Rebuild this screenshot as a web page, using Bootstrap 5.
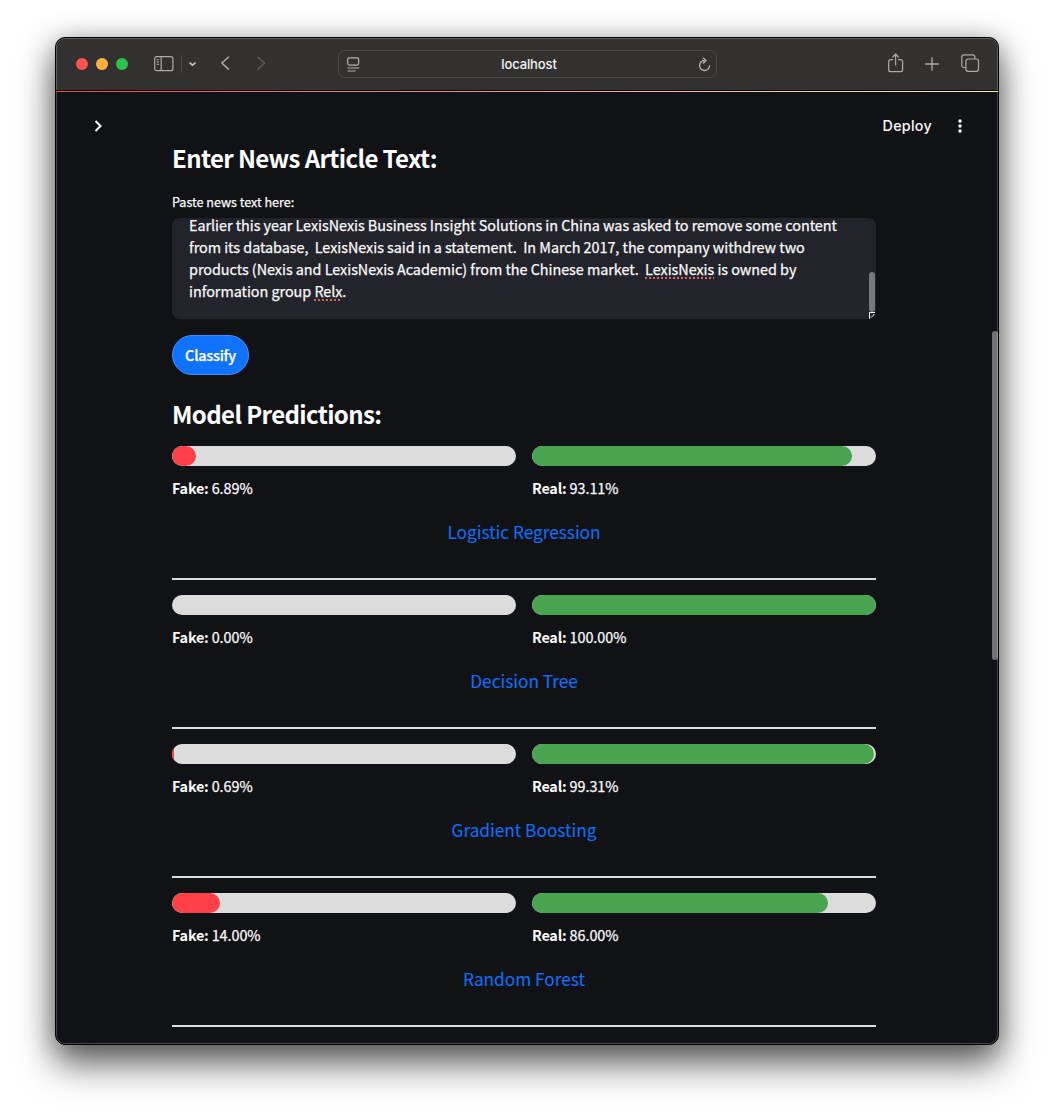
<!DOCTYPE html>
<html lang="en" data-bs-theme="dark">
<head>
<meta charset="utf-8">
<title>localhost</title>
<link href="https://cdn.jsdelivr.net/npm/bootstrap@5.3.0/dist/css/bootstrap.min.css" rel="stylesheet">
<style>
body{background:#fff;color:#fafafa;font-family:"Noto Sans CJK SC","Noto Sans",sans-serif;font-size:14.4px;line-height:24px;height:1118px;overflow:hidden}
.win{width:944px;height:1008px;margin:37px 0 0 55px;background:#111216;border:1px solid #000;border-radius:10px;overflow:hidden;position:relative}
.shade{width:944px;height:1008px;left:55px;top:37px;border-radius:10px;box-shadow:0 20px 36px rgba(0,0,0,.55),0 4px 28px rgba(0,0,0,.34)}
.rim{inset:0;border:1px solid rgba(255,255,255,.22);border-radius:9px;pointer-events:none;z-index:5}
.bar{height:52px;background:#32312f;color:#adacaa}
.dots{gap:8px;margin-left:20px}
.dots span{width:12px;height:12px;border-radius:50%}
.dot-close{background:#ff5350}.dot-min{background:#ffb13f}.dot-max{background:#2cc148}
.address{width:379px;height:28px;border:1px solid #494846;border-radius:7px;margin-left:72px;padding:0 5px 0 8px;color:#b5b4b2}
.host{font:500 13px Inter,sans-serif;color:#f4f4f4;letter-spacing:-.12px}
.accent{height:1px;margin-top:1px;position:relative;z-index:6;background:linear-gradient(90deg,#f04848,#f8f290);box-shadow:0 -1px #000}
.apphead{height:68px;padding:0 35px 0 38px}
.deploy{font:500 14.3px Inter,sans-serif;letter-spacing:.28px;margin-top:-2px}
.main{width:704px;margin:-19px 0 0 116px;-webkit-text-stroke:.25px currentColor}
.head3{font-size:24px;font-weight:700;line-height:34px;margin:0;letter-spacing:-.62px;white-space:nowrap;-webkit-text-stroke:0}
.lbl{font-size:12.6px;line-height:20px;margin-top:17px;letter-spacing:-.03px}
.box{height:101px;background:#23232b;border-radius:8px;overflow:hidden;margin-top:6px;padding:0 17px;line-height:22px;letter-spacing:-.035px}
.box div{white-space:pre;position:relative}
.box .l1{margin-top:-4px}
.box .sp{text-decoration:underline dotted #d8606a 2px;text-underline-offset:2px}
.thumb{width:6px;height:40px;right:1px;top:54px;background:#77787c;border-radius:3px}
.grip{right:0;bottom:0}
.go{width:77px;height:40px;border:1px solid #3f8dff;background:#0f73ff;border-radius:20px;color:#fff;margin-top:16px;font-weight:500;padding:0;font-size:14.4px;line-height:24px;letter-spacing:-.22px}
.predictions{margin-top:22px}
.models{margin-top:15px}
.track{height:20px;border-radius:10px;background:#dcdcdc}
.track .progress-bar{border-radius:10px}
.fake{background:#ff4048}.real{background:#48a44f}
.val{margin-top:10px;line-height:24px;letter-spacing:-.06px}
.val b{letter-spacing:-.22px;-webkit-text-stroke:0}
.model{height:149px}
.mname{color:#0f6ff5;font-size:17.3px;line-height:28px;margin-top:18px;letter-spacing:-.03px;-webkit-text-stroke:.1px}
.rule{height:2px;background:#dcdedd;margin-top:32px;margin-bottom:16px}
.scroll{width:6px;height:329px;right:0;top:293px;background:#717275;border-radius:3px;z-index:4}
svg{display:block;fill:none;stroke:currentColor;flex:none}
.i-side{margin-left:26px}.i-down{margin-left:7px}.i-back{margin-left:23px}.i-fwd{margin-left:26px;color:#5b5a58}
.i-share{margin-left:171px;margin-top:-2px}.i-plus{margin-left:21px}.i-tabs{margin-left:22px;margin-top:-1px}.i-dots{margin-left:25px;margin-top:-1px}
</style>
</head>
<body>
<div class="shade position-absolute"></div>
<div class="win">
 <div class="rim position-absolute"></div>
 <header class="bar d-flex align-items-center">
  <div class="dots d-flex"><span class="dot-close"></span><span class="dot-min"></span><span class="dot-max"></span></div>
  <svg class="i-side" width="20" height="16" viewBox="0 0 20 16" stroke-width="1.200"><rect x=".7" y=".7" width="18.200" height="14" rx="2"/><path d="M7.200 1v13.500"/><path d="M2.700 3.700h2.400M2.700 6h2.400M2.700 8.300h2.400" stroke-width="1"/></svg>
  <svg class="i-down" width="16" height="18" viewBox="0 0 16 18"><path d="M.5 0v18" stroke="#4a4947"/><path d="M8.500 7.700l3 2.500 3-2.500" stroke-width="1.700" stroke="#c8c7c5"/></svg>
  <svg class="i-back" width="10" height="16" viewBox="0 0 10 16" stroke-width="1.500"><path d="M8.900 .7L1.900 7l7 6.600"/></svg>
  <svg class="i-fwd" width="10" height="16" viewBox="0 0 10 16" stroke-width="1.500"><path d="M1.500 .7l7 6.300-7 6.600"/></svg>
  <div class="address d-flex align-items-center justify-content-between">
   <svg width="13" height="15" viewBox="0 0 13 15" stroke-width="1.200"><rect x=".7" y=".8" width="11" height="7.300" rx="1.500"/><path d="M.5 11h11.700M.5 14h8"/></svg>
   <span class="host">localhost</span>
   <svg width="13" height="15" viewBox="0 0 13 15" stroke-width="1.300"><path d="M6.500 3.500A5 5 0 1 0 11.600 8.200M5 .7l3 2.900-3 2.900"/></svg>
  </div>
  <svg class="i-share" width="16" height="20" viewBox="0 0 16 20" stroke-width="1.200"><path d="M5.200 6.700H2.700a2 2 0 0 0-2 2v8a2 2 0 0 0 2 2h9.900a2 2 0 0 0 2-2v-8a2 2 0 0 0-2-2h-2.500M7.650 12.500V1.400M4.500 4.200l3.150-3 3.150 3"/></svg>
  <svg class="i-plus" width="14" height="14" viewBox="0 0 14 14" stroke-width="1.300"><path d="M7 .3v13.400M.3 7h13.400"/></svg>
  <svg class="i-tabs" width="19" height="19" viewBox="0 0 19 19" stroke-width="1.200"><rect x="4.900" y="5" width="12.600" height="12.300" rx="2.300"/><path d="M4.800 13.500H3a2.200 2.200 0 0 1-2.200-2.200V3.100A2.200 2.200 0 0 1 3 .9h8.700a2.200 2.200 0 0 1 2.200 2.200v1.800"/></svg>
 </header>
 <div class="accent"></div>
 <div class="apphead d-flex align-items-center justify-content-between">
  <svg width="10" height="12" viewBox="0 0 10 12" stroke-width="2"><path d="M1.500 1l5 5-5 5"/></svg>
  <div class="d-flex align-items-center"><span class="deploy">Deploy</span>
  <svg class="i-dots" width="6" height="16" viewBox="0 0 6 16"><g fill="#fafafa" stroke="none"><circle cx="3" cy="3" r="1.700"/><circle cx="3" cy="8" r="1.700"/><circle cx="3" cy="13" r="1.700"/></g></svg></div>
 </div>
 <main class="main">
  <h3 class="head3">Enter News Article Text:</h3>
  <div class="lbl">Paste news text here:</div>
  <div class="box position-relative d-flex flex-column">
   <div class="l1">Earlier this year LexisNexis Business Insight Solutions in China was asked to remove some content</div>
   <div>from its database,  LexisNexis said in a statement.  In March 2017, the company withdrew two</div>
   <div>products (Nexis and LexisNexis Academic) from the Chinese market.  <span class="sp">LexisNexis</span> is owned by</div>
   <div>information group <span class="sp">Relx</span>.</div>
   <i class="thumb position-absolute"></i>
   <svg class="grip position-absolute" width="7" height="7" viewBox="0 0 7 7" stroke="#ddd"><path d="M.5 7V.5H6M2 5.500l3.500-3.500"/></svg>
  </div>
  <button class="go btn d-block">Classify</button>
  <h3 class="head3 predictions">Model Predictions:</h3>
  <div id="models" class="models"></div>
 </main>
 <i class="scroll position-absolute"></i>
</div>
<script src="https://cdn.jsdelivr.net/npm/bootstrap@5.3.0/dist/js/bootstrap.bundle.min.js"></script>
<script>
const models=[["Logistic Regression","6.89","93.11"],["Decision Tree","0.00","100.00"],["Gradient Boosting","0.69","99.31"],["Random Forest","14.00","86.00"]];
const half=(label,kind,v)=>`<div class="col"><div class="track progress"><div class="progress-bar ${kind}" style="width:${v}%"></div></div><div class="val"><b>${label}:</b> ${v}%</div></div>`;
document.getElementById("models").innerHTML=models.map(([n,f,r])=>`<section class="model"><div class="row gx-3">${half("Fake","fake",f)}${half("Real","real",r)}</div><div class="mname text-center">${n}</div><div class="rule"></div></section>`).join("");
</script>
</body>
</html>
